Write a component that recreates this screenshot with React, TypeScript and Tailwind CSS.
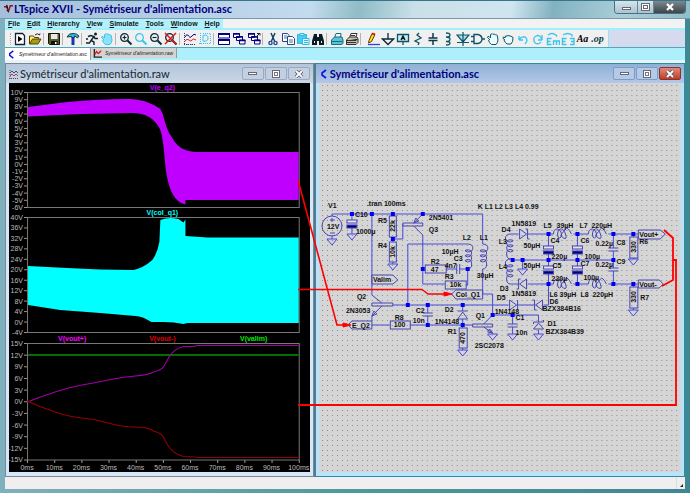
import { useState } from "react";
import type { ReactNode } from "react";
import { clsx } from "clsx";

type Point = [number, number];

const NAVY = "#000080";
const TEAL = "#0d5566";
const SKY = "#35c5f0";

/* ---------- Toolbar icons, all on a 14 x 14 grid ---------- */

const magnifier = (color: string, extra?: ReactNode) => (
  <g stroke={color} fill="none">
    <circle cx="5.5" cy="5.5" r="3.8" strokeWidth="1.3" />
    <path d="M8.5 8.5l4 4" strokeWidth="2" />
    {extra}
  </g>
);

const cascade = (
  <g fill="#fff" stroke={NAVY}>
    <path d="M1.500 1.500h6v4h-6zM4.500 4.500h6v4h-6zM7.500 8h5.500v4h-5.500z" />
    <path d="M1 2h7M4 5h7M7 8.500h6.500" strokeWidth="1.600" />
  </g>
);

const openHand = (fill: string, stroke: string) => (
  <path
    d="M4 8L1.500 5.500q0-1.500 1.500-1L4.500 6V2.500q.8-1.300 1.600 0 .7-1.800 1.700 0 1-1 1.700.5 1.300-.7 1.800.7L12 8q-.3 3-2 4.500H5.500Q3 11 2.500 8"
    fill={fill}
    stroke={stroke}
  />
);

type Tool = { name: string; icon: ReactNode };

const simTools: Tool[][] = [
  [
    {
      name: "Run",
      icon: (
        <g>
          <path d="M2.500 1.500h7l2 2v9h-9z" fill="#fff" stroke="#123" strokeWidth="1.300" />
          <path d="M5 4v6l4.500-3z" fill="#000" />
        </g>
      ),
    },
    {
      name: "Open",
      icon: (
        <g stroke="#554400">
          <path d="M1.500 12V4h4l1 1.500h4V7" fill="#fff36b" />
          <path d="M1.500 12l3-5h8.500l-3 5z" fill="#a59a22" />
          <path d="M7 3q2.500-2.500 4.500 0l.5-1.500" fill="none" stroke="#222" />
        </g>
      ),
    },
  ],
  [
    {
      name: "Save",
      icon: (
        <g>
          <path d="M1.500 1.500h11v11h-10l-1-1z" fill="#555a20" stroke="#111" />
          <path d="M4 2h6.500v5H4z" fill="#e8e8e8" />
          <path d="M4 9h6.500v3.500H4z" fill="#111" />
          <path d="M8 10h1.500v2H8z" fill="#fff" />
        </g>
      ),
    },
  ],
  [
    {
      name: "Control Panel",
      icon: (
        <g>
          <path d="M1 5q2-4 6-3.500 4 0 6 2.500l-1.500 2-2.500-2H8.500v1.500h-3V4.500z" fill="#37b8d8" stroke="#123a48" />
          <path d="M5.500 6h3v7h-3z" fill="#1835b5" />
        </g>
      ),
    },
  ],
  [
    {
      name: "Simulate",
      icon: (
        <g fill="none" stroke="#0a2430" strokeWidth="1.400">
          <path d="M3 4.500l3-1 3 1-3 4 3 1.500v3M9 4.500l1 2h3M6 8.500L4.500 11H1M1 7h2" />
          <circle cx="10.500" cy="2" r=".8" />
        </g>
      ),
    },
    { name: "Halt", icon: openHand("#8de2fa", SKY) },
  ],
  [
    { name: "Zoom in", icon: magnifier("#0b2a3a", <path d="M3.500 5.500h4M5.500 3.500v4" strokeWidth="1.200" />) },
    { name: "Pan", icon: magnifier(SKY) },
    { name: "Zoom out", icon: magnifier("#0b2a3a", <path d="M3.500 5.500h4" strokeWidth="1.200" />) },
    {
      name: "Zoom full",
      icon: magnifier("#0b2a3a", <path d="M1 1l11 11M12 1L1 12" stroke="#d81c1c" strokeWidth="1.500" />),
    },
  ],
  [
    {
      name: "Autorange",
      icon: (
        <g fill="none">
          <path d="M1.500 1v12M1 12.500h12M5 13v-2M9 13v-2" stroke="#223a70" strokeDasharray="1 1" />
          <path d="M2 5q2-4 3.500-1t3.500 0 4-1" stroke={NAVY} />
          <path d="M2 9q2-3 4-1t3 0 4 0" stroke="#d22" />
        </g>
      ),
    },
    {
      name: "Plot settings",
      icon: (
        <g fill="none" stroke={SKY}>
          <path d="M2.500 1v12M1 11.500h12M5 1.500h8M12.500 2v10" strokeDasharray="1 1" />
          <path d="M5 9V3.500q5-1.500 5 2.500T5 9" />
        </g>
      ),
    },
  ],
  [
    {
      name: "Tile",
      icon: (
        <g fill="#fff" stroke={NAVY}>
          <path d="M1.500 1.500h11v4.500h-11zM1.500 7.500h11v5h-11z" />
          <path d="M1 2h12M1 8h12" strokeWidth="2" />
        </g>
      ),
    },
    { name: "Cascade", icon: cascade },
    {
      name: "Close all",
      icon: (
        <g>
          {cascade}
          <path d="M9 5l3.500-3.500M10 1.500h3v2" stroke="#222" fill="none" />
        </g>
      ),
    },
  ],
  [
    {
      name: "Cut",
      icon: (
        <g fill="none" strokeWidth="1.400">
          <path d="M5 1l3.500 8M9 1L5.500 9" stroke="#123a5a" />
          <circle cx="4.500" cy="11" r="1.600" stroke="#1a4fa0" />
          <circle cx="9.500" cy="11" r="1.600" stroke="#1a4fa0" />
        </g>
      ),
    },
    {
      name: "Copy",
      icon: (
        <g fill="#fff" stroke="#244a86">
          <path d="M1.500 1.500h5l1.500 2v6H1.500z" />
          <path d="M6.500 4.500h5l2 2v6h-7z" />
          <path d="M3 4h3M3 6h3M8 8h4M8 10h4" strokeWidth=".8" />
        </g>
      ),
    },
    {
      name: "Paste",
      icon: (
        <g>
          <path d="M1.500 2.500h9v9h-9z" fill="#49cdf3" stroke="#2bb9e6" />
          <path d="M4 1.500h4v2H4z" fill="#d8f6ff" stroke="#2bb9e6" />
          <path d="M6.500 6.500h6.500v6H6.500z" fill="#e5faff" stroke="#2bb9e6" />
          <path d="M8 8.500h4M8 10.500h4" stroke="#2bb9e6" />
        </g>
      ),
    },
    {
      name: "Find",
      icon: (
        <g fill="#081c22">
          <path d="M3 2h3v3h2V2h3l2 7v4H8V9H6v4H1V9z" />
          <path d="M3 9h1v2H3zM10 9h1v2h-1z" fill="#eee" />
        </g>
      ),
    },
  ],
  [
    {
      name: "Print setup",
      icon: (
        <g stroke="#186a7c">
          <path d="M4.500 6l1.500-4.500h5L10.500 6" fill="#e9ffff" />
          <path d="M1.500 8l3-3h7.500l1 3v3.500l-2 1H1.500z" fill="#58c6d6" />
          <path d="M2 9.500h10" />
        </g>
      ),
    },
    {
      name: "Print",
      icon: (
        <g stroke="#333">
          <path d="M4.500 6L6 1.500h6L10.500 6" fill="#fff" />
          <path d="M1.500 8l3-3h7.500l1 2v3.500l-2 2H1.500z" fill="#c4c3ae" />
          <path d="M2 8.500h9l1.500-1.500M2 10.500h9M6 3.500h4" />
        </g>
      ),
    },
  ],
];

const drawTools: Tool[] = [
  {
    name: "Wire",
    icon: (
      <g>
        <path d="M3 8.500L6 1.500l3 1L5.500 9.500 2.500 11z" fill="#ffe21c" stroke="#5a3a00" />
        <path d="M6 1.500l3 1" stroke="#d22" strokeWidth="2" />
        <path d="M2 12.500h12" stroke="#3a3af0" strokeWidth="1.300" />
      </g>
    ),
  },
  { name: "Ground", icon: <path d="M7 1v6M1.500 7h11L7 12.500z" fill="none" stroke="#0a2a33" strokeWidth="1.300" /> },
  {
    name: "Label net",
    icon: (
      <g fill="none" stroke={TEAL} strokeWidth="1.300">
        <path d="M1.500 2.500h11v7h-11zM7 9.500V13" fill="#c6eef5" />
        <path d="M5 8l2-4 2 4M6 6.500h2" stroke="#111" />
      </g>
    ),
  },
  { name: "Resistor", icon: <path d="M8 1L6 3l4 3-6 3 4 2-1 2" fill="none" stroke={TEAL} strokeWidth="1.300" /> },
  {
    name: "Capacitor",
    icon: <path d="M7 1v5M2.500 6h9M2.500 8.500h9M7 8.500V13" fill="none" stroke="#0a3a48" strokeWidth="1.500" />,
  },
  {
    name: "Inductor",
    icon: <path d="M5 1q4 0 4 2t-4 2q4 0 4 2.200T5 9.500q4 0 4 1.700T5 13" fill="none" stroke={TEAL} strokeWidth="1.300" />,
  },
  {
    name: "Diode",
    icon: <path d="M7 0v14M1 3h12L7 10zM1 10.500h12" fill="#a8e4ee" stroke={TEAL} strokeWidth="1.200" />,
  },
  {
    name: "Component",
    icon: <path d="M0 4.500h3M0 9.500h3M3 2.500h4q4 1 4 4.500t-4 4.500H3zM11 7h3" fill="none" stroke={TEAL} strokeWidth="1.400" />,
  },
  { name: "Move", icon: openHand("#e8fcff", TEAL) },
  {
    name: "Drag",
    icon: (
      <path
        d="M4 8L2 6.500q-.5-1.500 1-1.500L4 6q0-3 2-2 1-1 2 0 1-1 2 .5 2 0 2 1.500 0 4-2 6H6Q4 10.500 3 8"
        fill="#e8fcff"
        stroke={TEAL}
      />
    ),
  },
  { name: "Undo", icon: <path d="M3 8V4M3 8h4M3 8q2-4 6-3 4 3 0 7" fill="none" stroke={SKY} strokeWidth="1.300" /> },
  { name: "Redo", icon: <path d="M11 8V3M11 8H7M11 8Q9 2 5 4t-1 7q4 2 6-1" fill="none" stroke={SKY} strokeWidth="1.300" /> },
  {
    name: "Rotate",
    icon: (
      <path
        d="M2 3q4-3 8 0l1 1.500M5.500 6.500h-4v6h4M1.500 9.500h3M7.500 13V9h6v4M10.500 9v4"
        fill="none"
        stroke={SKY}
        strokeWidth="1.400"
      />
    ),
  },
  {
    name: "Mirror",
    icon: (
      <path
        d="M2 3q5-3 9 0v1.500M5.500 6.500h-4v6h4M1.500 9.500h3M9 6.500h4v6H9M13 9.500h-3"
        fill="none"
        stroke={SKY}
        strokeWidth="1.400"
      />
    ),
  },
];

function ToolButton({ name, children }: { name: string; children: ReactNode }) {
  return (
    <button type="button" aria-label={name} className="flex h-4 w-[15px] shrink-0 items-center justify-center">
      {children}
    </button>
  );
}

function Icon({ children }: { children: ReactNode }) {
  return (
    <svg viewBox="0 0 14 14" className="h-3.5 w-3.5">
      {children}
    </svg>
  );
}

const Separator = () => <span className="mr-[2px] ml-px h-3 w-px shrink-0 bg-[#b4b4b4]" />;

function Toolbar() {
  return (
    <div className="flex h-[18px] shrink-0 items-stretch border-b border-[#4fa9b8] bg-[#d5daee]">
      <div className="flex items-center border-r border-[#8fe6f5] bg-[#f0f0f0] pr-[3px] pl-[5px]">
        <span className="mr-px h-3 w-px border-l border-dotted border-[#aaa]" />
        {simTools.map((group, i) => (
          <div key={i} className="flex items-center">
            {group.map((tool) => (
              <ToolButton key={tool.name} name={tool.name}>
                <Icon>{tool.icon}</Icon>
              </ToolButton>
            ))}
            <Separator />
          </div>
        ))}
        <div className="ml-[2px] flex items-center">
          {drawTools.map((tool) => (
            <ToolButton key={tool.name} name={tool.name}>
              <Icon>{tool.icon}</Icon>
            </ToolButton>
          ))}
          <ToolButton name="Text">
            <span className="font-['Liberation_Serif',serif] text-[10px] leading-3 font-bold text-black italic">Aa</span>
          </ToolButton>
          <ToolButton name="SPICE directive">
            <span className="font-['Liberation_Serif',serif] text-[10px] leading-3 font-bold text-[#0d3c4c] italic">.op</span>
          </ToolButton>
        </div>
      </div>
    </div>
  );
}

/* ---------- Window chrome ---------- */

function ChildWindow({
  title,
  active,
  icon,
  className,
  children,
}: {
  title: string;
  active?: boolean;
  icon: ReactNode;
  className: string;
  children: ReactNode;
}) {
  const control = "flex h-[13px] w-[22px] items-center justify-center rounded-[2px] border";
  const plain = active ? "border-[#7d9dc4] bg-[#b5cae6]" : "border-[#99aac0] bg-[#c3d0e2]";

  return (
    <section
      className={clsx(
        "flex min-w-0 flex-col border px-[3px] pb-1",
        active ? "border-[#2b8ea6] bg-[#b9e3fb]" : "border-[#7b8794] bg-[#d5e7f8]",
        className
      )}
    >
      <header
        className={clsx(
          "-mx-[3px] flex h-[19px] shrink-0 items-center gap-px pr-[3px] pl-[3px]",
          active ? "bg-linear-to-b from-[#8fb0d6] to-[#b2c8e6]" : "bg-linear-to-b from-[#b4c6dc] to-[#c9d6e6]"
        )}
      >
        <svg viewBox="0 0 10 10" className="h-[10px] w-[10px] shrink-0">
          {icon}
        </svg>
        <h2
          className={clsx(
            "flex-1 truncate font-[Lato,sans-serif] text-[11px] leading-4",
            active ? "font-bold text-[#000080]" : "font-medium text-[#22303a]"
          )}
        >
          {title}
        </h2>
        <div className="flex gap-px">
          <button type="button" aria-label="Minimize" className={clsx(control, plain)}>
            <span className="h-[3px] w-[9px] border border-[#667] bg-white" />
          </button>
          <button type="button" aria-label="Maximize" className={clsx(control, plain)}>
            <span className="h-[8px] w-[8px] border border-[#667] bg-white p-px">
              <span className="block h-full w-full border border-[#778]" />
            </span>
          </button>
          <button
            type="button"
            aria-label="Close"
            className={clsx(control, active ? "border-[#8a3328] bg-linear-to-b from-[#dc8a78] to-[#c03a22]" : plain)}
          >
            <svg viewBox="0 0 10 8" className="h-2 w-[10px]">
              <path d="M2 1l6 6M8 1L2 7" stroke="#556" strokeWidth="3.400" />
              <path d="M2 1l6 6M8 1L2 7" stroke="#fff" strokeWidth="1.800" />
            </svg>
          </button>
        </div>
      </header>
      <div className="min-h-0 flex-1">{children}</div>
    </section>
  );
}

/* ---------- Waveform viewer ---------- */

const range = (from: number, to: number, step: number) =>
  Array.from({ length: Math.round((to - from) / step) + 1 }, (_, i) => from + i * step);

function Pane({ top, bottom, values }: { top: number; bottom: number; values: number[] }) {
  const gap = (bottom - top) / (values.length - 1);
  return (
    <g>
      <rect x="27.500" y={top} width="271" height={bottom - top} fill="none" stroke="#777" />
      {values.map((v, i) => (
        <g key={v}>
          <path d={`M24 ${top + i * gap}h3`} stroke="#999" />
          <text x="23" y={top + i * gap + 2.500} textAnchor="end" fill="#bcbcbc">
            {v}V
          </text>
        </g>
      ))}
    </g>
  );
}

function Waveforms() {
  return (
    <svg
      viewBox="9 83 300 389"
      preserveAspectRatio="none"
      className="block h-full w-full bg-black font-['Liberation_Sans',sans-serif] text-[7px]"
    >
      <Pane top={92.500} bottom={207.500} values={range(-6, 10, 1).reverse()} />
      <path
        fill="#c000ff"
        d="M28 107L67 102Q100 99 127 99 144 98 160 109 163 114 164 120 167 131 170 135 177 148 185 150 190 152 200 152H298V200H185V204.500Q173 202 168 183 165 171 164 155 162 133 159 128 151 113 132 113L80 114 28 116.500Z"
      />
      <Pane top={217.500} bottom={332.500} values={range(-4, 40, 4).reverse()} />
      <path
        fill="#00ffff"
        d="M28 266L67 268Q100 270 133 270 143 268 152 260 157 253 159 242L160 220 165 218.500Q171 217.500 178 219L183 222.500 185 219.500V236L207 237.500H298V323H187L183 324Q174 322 163 322H151Q142 316 135 316L100 313 60 310 28 305Z"
      />
      <Pane top={343.500} bottom={460} values={range(-15, 15, 3).reverse()} />
      <g fill="none">
        <path d="M28 355H298" stroke="#006e00" strokeWidth="2" />
        <path d="M27 402Q40 397 55 392T82 385 108 380 135 376 153 372Q161 370 163 367 166 362 168 358 173 349 183 346.500L194 346.500 196 345.500H298" stroke="#a000a8" />
        <path d="M27 401Q40 407 55 412T82 418 108 423 135 427 153 431Q161 433 163 437 166 443 168 446 173 454 183 456.500L195 457 197 457.500H298" stroke="#960000" />
      </g>
      {range(0, 100, 10).map((ms, i) => (
        <g key={ms}>
          <path d={`M${27.500 + i * 27.100} 460v3`} stroke="#999" />
          <text x={27 + i * 27.100} y="470" textAnchor="middle" fill="#bcbcbc">
            {ms}ms
          </text>
        </g>
      ))}
      <g fontWeight="700" textAnchor="middle">
        <text x="162" y="90" fill="#c000ff">V(e_q2)</text>
        <text x="162" y="215" fill="#00ffff">V(col_q1)</text>
        <text x="72" y="341" fill="#ff00ff">V(vout+)</text>
        <text x="162" y="341" fill="#e00000">V(vout-)</text>
        <text x="253" y="341" fill="#00e800">V(valim)</text>
      </g>
    </svg>
  );
}

/* ---------- Schematic ---------- */

const labels: [string, number, number][] = [
  ["V1", 327, 208], ["12V", 326, 229], ["C10", 354, 217], ["1000µ", 355, 234], [".tran 100ms", 366, 206],
  ["R5", 377, 223], ["R4", 377, 248], ["2N5401", 428, 220], ["Q3", 428, 232], ["Valim", 372, 282],
  ["Q2", 356, 299], ["2N3053", 345, 313], ["E_Q2", 351, 328], ["R8", 394, 320], ["100", 393, 327],
  ["C2", 415, 313], ["10n", 412, 323], ["R2", 430, 264], ["47", 430, 272], ["C3", 453, 261],
  ["4n7", 444, 268], ["10µH", 441, 254], ["L2", 462, 240], ["L1", 479, 240], ["30µH", 476, 278],
  ["R3", 444, 279], ["10k", 449, 287], ["Col_Q1", 455, 297], ["D2", 444, 312], ["1N4148", 434, 324],
  ["R1", 447, 334], ["Q1", 475, 318], ["2SC2078", 474, 348], ["K L1 L2 L3 L4 0.99", 477, 209],
  ["1N5819", 511, 226], ["D4", 501, 232], ["L3", 498, 244], ["L4", 498, 269], ["50µH", 523, 248],
  ["50µH", 523, 268], ["D3", 499, 291], ["1N5819", 511, 296], ["D5", 496, 300], ["1N4148", 494, 314],
  ["C1", 515, 320], ["10n", 515, 335], ["L5", 543, 228], ["39µH", 556, 228], ["L7", 579, 228],
  ["220µH", 591, 228], ["C4", 550, 243], ["220µ", 551, 259], ["C5", 552, 268], ["220µ", 551, 281],
  ["C6", 580, 243], ["100µ", 584, 259], ["C7", 580, 266], ["100µ", 583, 280], ["0.22µ", 595, 246],
  ["C8", 616, 245], ["0.22µ", 595, 267], ["C9", 616, 264], ["Vout+", 639, 237], ["Vout-", 639, 287],
  ["R6", 639, 244], ["R7", 640, 300], ["L6", 549, 297], ["39µH", 559, 297], ["L8", 580, 297],
  ["220µH", 592, 297], ["D6", 549, 304], ["BZX384B16", 542, 311], ["D1", 547, 326], ["BZX384B39", 545, 334],
];

const verticalLabels: [string, number, number][] = [
  ["22k", 394, 226], ["10k", 394, 252], ["470", 464, 338], ["330", 636, 247], ["330", 636, 297],
];

const junctions: Point[] = [
  [351, 214], [371, 214], [392, 214], [422, 214], [392, 239], [422, 269], [407, 305], [427, 305], [427, 325],
  [467, 269], [462, 305], [462, 325], [492, 315], [512, 315], [512, 260], [522, 260], [548, 234], [548, 260],
  [548, 284], [577, 234], [577, 260], [577, 284], [613, 234], [613, 260], [613, 284], [633, 234], [633, 284],
];

const grounds: Point[] = [
  [331, 239], [351, 234], [392, 264], [462, 350], [492, 334], [512, 334], [538, 334], [522, 269], [633, 259], [633, 310],
];

const resistors: [number, number, number, number][] = [
  [388, 216, 7, 21], [388, 242, 7, 20], [389, 321, 20, 8], [424, 265, 21, 8], [444, 281, 21, 8],
  [458, 328, 8, 20], [629, 237, 8, 21], [629, 287, 8, 21],
];

const polarCaps: Point[] = [[351, 220], [548, 246], [548, 266], [577, 246], [577, 266]];
const plainCaps: Point[] = [[427, 313], [512, 324], [613, 248], [613, 268]];

const wires = [
  "M331 216V214H482V244", "M331 236v3", "M351 214v6M351 228v6", "M371 214V295", "M392 214v2M392 237v5M392 262v2",
  "M392 239H402V224", "M422 235V284H444", "M407 305V244H467", "M392 305H508M517 305H534M543 305H548V284",
  "M371 316V321M371 325H389M409 325H472", "M427 305v8M427 316v9", "M445 269H456M459 269H467M465 285H467V269",
  "M482 269V294H492V315H538V322", "M462 305v6M462 319v9M462 348v2", "M492 333v1M512 315v9M512 327v7M538 330v4",
  "M510 234H518M527 234H553M573 234H588M608 234H638", "M510 284H518M527 284H553M573 284H588M608 284H638",
  "M512 260H613M522 260v9", "M548 234v12M548 254v12M548 274v10", "M577 234v12M577 254v12M577 274v10",
  "M613 234v14M613 251v17M613 271v13", "M633 234v3M633 258v1M633 284v3M633 308v2",
];

const symbols = [
  // net flags
  "M371 275h21l5 5-5 4h-21z", "M371 321h-20l-4 4 4 4h20z", "M482 290h-27l-4 4 4 5h27z",
  "M638 230h22l5 4-5 5h-22z", "M638 280h21l4 4-4 4h-21z",
  // transistors
  "M371 303h21v3h-21zM371 295l10 8M381 306l-10 10M371 316l2-5 3 3z",
  "M402 223h20v3h-20zM422 214l-9 9M413 226l9 9M413 223l2-5 3 3z",
  "M472 324h20v3h-20zM492 315l-9 9M483 327l9 6M492 333l-5-1 2-3z",
  // diodes
  "M519 229v10l7-5zM527 229v10M525 229h2M527 239h2", "M526 279v10l-7-5zM518 279v10M518 279h2M516 289h2",
  "M509 300v10l7-5zM517 300v10", "M542 300v10l-7-5zM534 300v10M532 300h2M534 310h2",
  "M457 319h10l-5-7zM457 311h10", "M533 329h10l-5-6zM533 322h10M533 322v2M543 322v-2",
  // source
  "M329 220h5M331 218v4M329 233h5", "M456 264v10M459 264v10",
];

const coil = (x: number, y: number) =>
  `M${x} ${y}c7 0 7 8 0 8q-4-1-2-2 6-1 6 3 0 4-4 4-4-1-2-2 6-1 6 3 0 4-4 4-4-1-2-2 6-2 6 4 0 5-4 5`;

const flatCoil = (x: number, y: number) =>
  `M${x} ${y}q0-5 4-5 4 1 4 5t-2 4-2-4 3-5 5 5-2 4-2-4 4-5 6 5`;

function Schematic() {
  return (
    <svg
      viewBox="318 83 363 389"
      preserveAspectRatio="none"
      className="block h-full w-full bg-[#d5d5d5] font-['Liberation_Sans',sans-serif] text-[7px]"
    >
      <defs>
        <pattern id="grid" x="321" y="85" width="5" height="5" patternUnits="userSpaceOnUse">
          <rect width="1" height="1" fill="#8c8c8c" />
        </pattern>
      </defs>
      <rect x="318" y="83" width="363" height="389" fill="url(#grid)" />
      <path d={wires.join("")} fill="none" stroke="#4848e0" />
      <g fill="none" stroke="#4646b4">
        <circle cx="331" cy="226" r="10" />
        <path d={symbols.join("")} />
        {resistors.map(([x, y, w, h]) => (
          <rect key={`${x}-${y}`} x={x + 0.5} y={y} width={w} height={h} />
        ))}
        {polarCaps.map(([x, y]) => (
          <g key={`${x}-${y}`}>
            <rect x={x - 5} y={y} width="10" height="3" fill="#e4e4ee" />
            <rect x={x - 5} y={y + 5} width="10" height="3" fill={NAVY} />
          </g>
        ))}
        {plainCaps.map(([x, y]) => (
          <path key={`${x}-${y}`} d={`M${x - 5} ${y}h10M${x - 5} ${y + 3}h10`} />
        ))}
        <path d={coil(467, 244)} />
        <path d={coil(482, 244)} />
        <g transform="translate(1020 0) scale(-1 1)">
          <path d={coil(510, 234)} />
          <path d={coil(510, 259)} />
        </g>
        <path d={flatCoil(553, 234)} />
        <path d={flatCoil(588, 234)} />
        <path d={flatCoil(553, 284)} />
        <path d={flatCoil(588, 284)} />
      </g>
      {grounds.map(([x, y]) => (
        <path key={`${x}-${y}`} d={`M${x - 5} ${y}h10l-5 6z`} fill="none" stroke="#4848e0" />
      ))}
      {junctions.map(([x, y]) => (
        <rect key={`${x}-${y}`} x={x - 2} y={y - 2} width="4" height="4" fill="#0000f0" />
      ))}
      <g fill="#111" fontWeight="700">
        {labels.map(([text, x, y]) => (
          <text key={`${x}-${y}`} x={x} y={y}>
            {text}
          </text>
        ))}
        {verticalLabels.map(([text, x, y]) => (
          <text key={`${x}-${y}`} transform={`translate(${x} ${y}) rotate(-90)`} textAnchor="middle">
            {text}
          </text>
        ))}
      </g>
    </svg>
  );
}

/* Red links from the traces to their nets, drawn across both windows */
function Links() {
  return (
    <svg
      viewBox="5 63 680 414"
      preserveAspectRatio="none"
      className="pointer-events-none absolute inset-0 h-full w-full"
      aria-hidden="true"
    >
      <g fill="none" stroke="#ff0000">
        <path d="M298 180L337 325H345" strokeWidth="1.600" />
        <path d="M298 289.500H422L428 294H446" strokeWidth="1.300" />
        <path d="M664 230L673 238V280L662 286M673 260H676V405H298" strokeWidth="1.800" />
      </g>
      <path d="M343 323l8 2-8 2zM444 292l8 2-8 2z" fill="#ff0000" stroke="#ff0000" />
    </svg>
  );
}

const menus = ["File", "Edit", "Hierarchy", "View", "Simulate", "Tools", "Window", "Help"];
const tabs = ["Symétriseur d'alimentation.asc", "Symétriseur d'alimentation.raw"];

const schematicIcon = <path d="M7 1L3 4v2l4 3" fill="none" stroke="#1010e0" strokeWidth="1.600" />;
const plotIcon = (
  <g fill="none">
    <path d="M0 9.500h10M1 1v9" stroke="#445" strokeDasharray="1 1" />
    <path d="M1 4l2-2 2 2 2-2 2 2" stroke="#3a4a90" />
    <path d="M1 7l2-2 2 2 2-2 2 2" stroke="#b04050" />
  </g>
);

export default function App() {
  const [activeTab, setActiveTab] = useState(tabs[0]);

  return (
    <div className="flex h-screen flex-col overflow-hidden bg-linear-to-r from-[#7fb0bd] via-[#4d9a9c] to-[#3f8793] px-[5px] pb-1 font-['Liberation_Sans',sans-serif]">
      {/* Title bar */}
      <header className="-mx-[5px] flex h-[19px] shrink-0 items-start border-t border-b border-t-[#39758a] border-b-[#7898ad] bg-[linear-gradient(100deg,#a4bedb_0%,#c3dbee_45%,#8fbcc6_52%,#c9e0e8_60%,#cfe5f0_74%,#82b2bf_80%,#a9cfda_90%,#8fbfca_100%)] pl-1">
        <svg viewBox="0 0 10 10" className="mt-[3px] mr-px h-[9px] w-[9px] shrink-0">
          <path d="M0 3h3l2 5 2-6h3" fill="none" stroke="#8b1020" strokeWidth="1.600" />
          <path d="M3 1l1 4M5 8l-2-1" stroke="#111" strokeWidth="1.400" />
        </svg>
        <h1 className="flex-1 truncate font-[Lato,sans-serif] text-[11px] leading-4 font-bold text-[#00007c]">
          LTspice XVII - Symétriseur d'alimentation.asc
        </h1>
        <div className="mr-1 flex h-[13px] overflow-hidden rounded-b-[4px] border border-t-0 border-[#4f6f80]">
          <button type="button" aria-label="Minimize" className="flex w-[23px] items-end justify-center border-r border-[#6b8797] bg-linear-to-b from-[#d5e5ec] to-[#a9c4cf] pb-[3px]">
            <span className="h-[3px] w-[9px] border border-[#667] bg-white" />
          </button>
          <button type="button" aria-label="Maximize" className="flex w-4 items-center justify-center border-r border-[#6b8797] bg-linear-to-b from-[#d5e5ec] to-[#a9c4cf]">
            <span className="h-2 w-[9px] border border-[#667] bg-white p-px">
              <span className="block h-full w-full border border-[#667]" />
            </span>
          </button>
          <button type="button" aria-label="Close" className="flex w-[31px] items-center justify-center bg-linear-to-b from-[#7e8a90] to-[#3c464b]">
            <svg viewBox="0 0 10 8" className="h-2 w-[10px]">
              <path d="M2 1l6 6M8 1L2 7" stroke="#fff" strokeWidth="2.200" />
            </svg>
          </button>
        </div>
      </header>

      {/* Menu bar */}
      <nav className="flex h-[11px] shrink-0 border-b-2 border-[#9df0fc] bg-[#f2f2f2]">
        <div className="flex items-center gap-[7px] bg-[#b4f0fc] px-[3px]">
          {menus.map((menu) => (
            <button key={menu} type="button" className="text-[7px] leading-[9px] font-bold text-[#101820]">
              <span className="underline">{menu[0]}</span>
              {menu.slice(1)}
            </button>
          ))}
        </div>
      </nav>

      <Toolbar />

      {/* Document tabs */}
      <div role="tablist" className="flex h-[15px] shrink-0 items-start border-b-[3px] border-[#e9f2f6] bg-[#aeeffc]">
        {tabs.map((tab, i) => (
          <button
            key={tab}
            type="button"
            role="tab"
            aria-selected={tab === activeTab}
            onClick={() => setActiveTab(tab)}
            className={clsx(
              "flex items-center gap-[3px] border-r border-[#999] pr-[3px] pl-[2px] text-[5px] leading-none text-[#222] italic",
              tab === activeTab ? "h-3 bg-white" : "h-[10px] bg-[#d4d4d4]"
            )}
          >
            <svg viewBox="0 0 10 10" className="h-[9px] w-[9px]">
              {i === 0 ? (
                schematicIcon
              ) : (
                <g fill="none">
                  <path d="M1.500 0v9h9" stroke="#222" strokeWidth="1.500" />
                  <path d="M2 6l2-3 2 2 3-3" stroke="#e02020" strokeWidth="1.600" />
                </g>
              )}
            </svg>
            {tab}
          </button>
        ))}
      </div>

      {/* Child windows */}
      <main className="relative flex min-h-0 flex-1 gap-px bg-[#6b7078]">
        <ChildWindow title="Symétriseur d'alimentation.raw" icon={plotIcon} className="flex-[308_1_0%]">
          <Waveforms />
        </ChildWindow>
        <ChildWindow title="Symétriseur d'alimentation.asc" icon={schematicIcon} active className="flex-[371_1_0%]">
          <Schematic />
        </ChildWindow>
        <Links />
      </main>

      <footer className="flex h-3 shrink-0 items-end justify-end bg-[#f0eeee]">
        <span className="h-full w-px bg-[#ddd]" />
        <svg viewBox="0 0 8 8" className="h-2 w-2">
          <path d="M6 3v3H3z" fill="#222" />
        </svg>
      </footer>
    </div>
  );
}
